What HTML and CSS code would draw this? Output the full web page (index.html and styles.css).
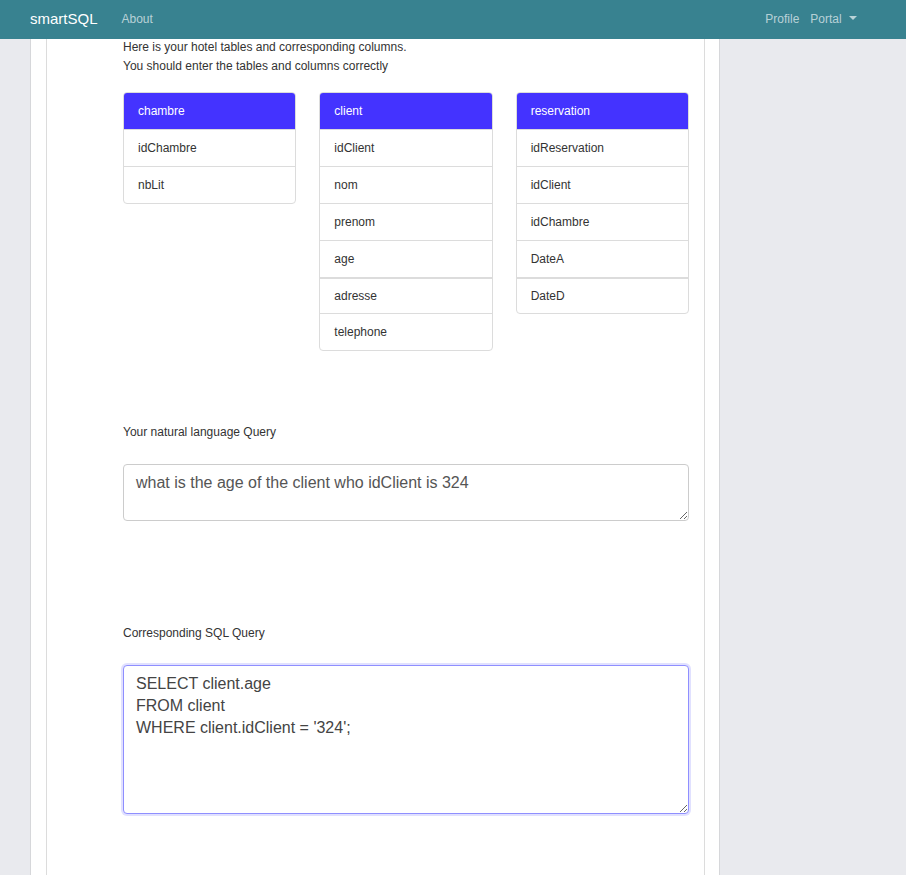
FILE: index.html
```html
<!DOCTYPE html>
<html lang="en">
<head>
<meta charset="utf-8">
<title>smartSQL</title>
<link rel="stylesheet" href="styles.css">
</head>
<body>
<nav class="navbar">
  <div class="nav-left">
    <span class="brand">smartSQL</span>
    <span class="nav-link">About</span>
  </div>
  <div class="nav-right">
    <span class="nav-link">Profile</span>
    <span class="nav-link">Portal <span class="caret"></span></span>
  </div>
</nav>
<div class="page">
  <div class="card">
    <p class="intro">Here is your hotel tables and corresponding columns.<br>You should enter the tables and columns correctly</p>
    <div class="tables">
      <div class="table">
        <div class="table-head">chambre</div>
        <div class="table-row">idChambre</div>
        <div class="table-row">nbLit</div>
      </div>
      <div class="table">
        <div class="table-head">client</div>
        <div class="table-row">idClient</div>
        <div class="table-row">nom</div>
        <div class="table-row">prenom</div>
        <div class="table-row">age</div>
        <div class="table-row split">adresse</div>
        <div class="table-row">telephone</div>
      </div>
      <div class="table">
        <div class="table-head">reservation</div>
        <div class="table-row">idReservation</div>
        <div class="table-row">idClient</div>
        <div class="table-row">idChambre</div>
        <div class="table-row">DateA</div>
        <div class="table-row split">DateD</div>
      </div>
    </div>
    <label class="label first">Your natural language Query</label>
    <textarea class="field nl" spellcheck="false">what is the age of the client who idClient is 324</textarea>
    <label class="label second">Corresponding SQL Query</label>
    <textarea class="field sql focused" spellcheck="false">SELECT client.age
FROM client
WHERE client.idClient = '324';
</textarea>
  </div>
</div>
</body>
</html>
```
FILE: styles.css
```css
* { box-sizing: border-box; }
html, body { margin: 0; padding: 0; }
body {
  background: #e9eaee;
  font-family: "Liberation Sans", Arial, sans-serif;
  color: #333;
  font-size: 12px;
}
.navbar {
  position: fixed;
  top: 0; left: 0; right: 0;
  height: 39px;
  background: #388290;
  display: flex;
  justify-content: space-between;
  align-items: center;
  padding: 0 49px 2px 30px;
  z-index: 10;
}
.nav-left, .nav-right { display: flex; align-items: center; }
.brand { color: #fff; font-size: 15px; margin-right: 24px; }
.nav-link { color: rgba(255,255,255,0.65); font-size: 12px; }
.nav-right .nav-link { margin-left: 11px; }
.caret {
  display: inline-block;
  width: 0; height: 0;
  border-left: 4px solid transparent;
  border-right: 4px solid transparent;
  border-top: 4px solid rgba(255,255,255,0.65);
  vertical-align: 3px;
  margin-left: 4px;
}
.page {
  width: 690px;
  margin-left: 30px;
  background: #fff;
  border-left: 1px solid #d6d7da;
  border-right: 1px solid #d6d7da;
  padding: 0 14px 0 15px;
  min-height: 875px;
}
.card {
  border-left: 1px solid #dcdcdc;
  border-right: 1px solid #dcdcdc;
  min-height: 875px;
  padding: 38px 0 0 76px;
}
.intro { margin: 0; line-height: 19px; }
.tables {
  width: 566px;
  margin-top: 16px;
  display: grid;
  grid-template-columns: repeat(3, 1fr);
  column-gap: 23px;
  align-items: start;
}
.table {
  border: 1px solid #dcdcdc;
  border-radius: 4px;
  overflow: hidden;
}
.table-head {
  background: #4433ff;
  color: #fff;
  margin: -1px -1px 0 -1px;
  padding: 0 14px 0 15px;
  height: 37px;
  line-height: 38px;
}
.table-row {
  border-top: 1px solid #dcdcdc;
  height: 37px;
  line-height: 36px;
  padding: 0 14px;
}
.table-row.split { border-top-width: 2px; height: 36px; line-height: 34px; }
.label { display: block; line-height: 14px; }
.label.first { margin-top: 74px; }
.label.second { margin-top: 105px; }
.field {
  display: block;
  width: 566px;
  margin-top: 25px;
  border: 1px solid #ccc;
  border-radius: 4px;
  padding: 7px 12px 5px;
  font-family: "Liberation Sans", Arial, sans-serif;
  font-size: 16px;
  line-height: 22px;
  color: #555;
  background: #fff;
  outline: none;
}
.field.nl { height: 57px; }
.field.sql { height: 149px; color: #444; }
.field.focused {
  border-color: #8f8fff;
  box-shadow: 0 0 0 2px rgba(120, 120, 255, 0.22);
}
```
